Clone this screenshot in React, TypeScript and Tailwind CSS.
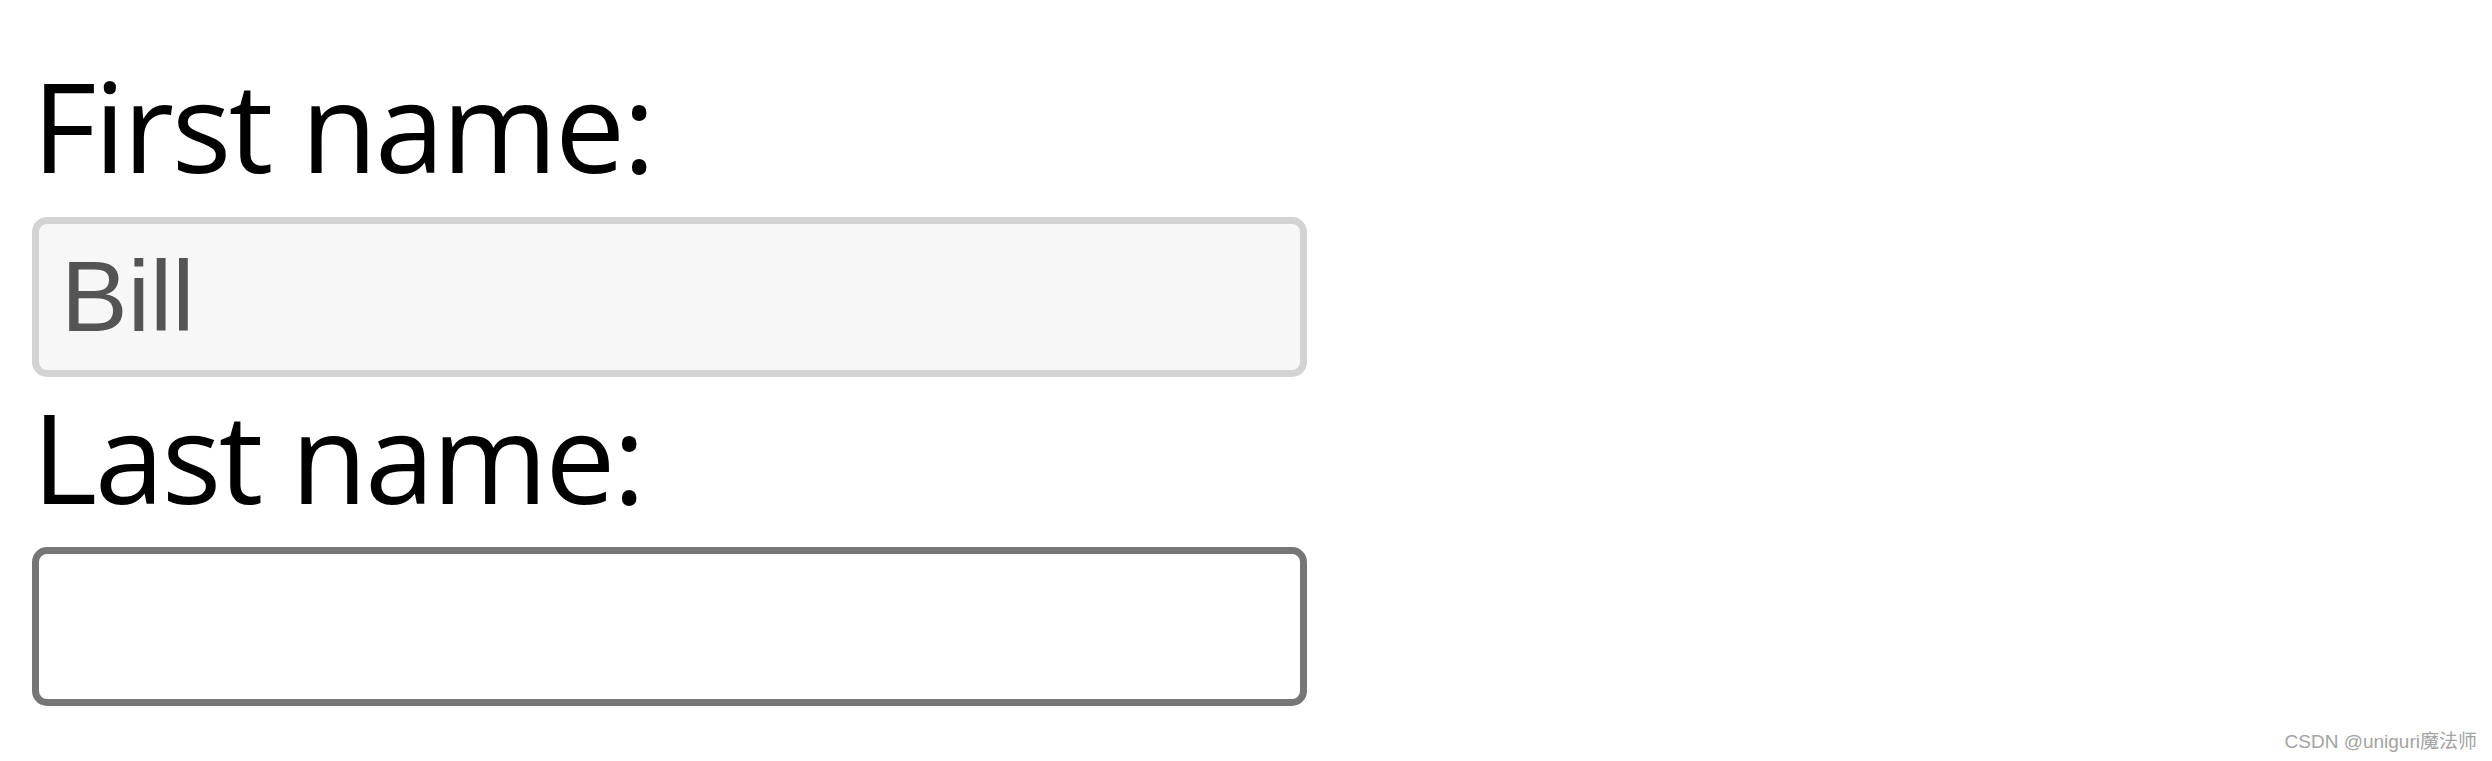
import React from 'react'

const labelFont = { fontFamily: '"Open Sans", "Noto Sans", sans-serif' }

function Label({ text }: { text: string }) {
  return (
    <div
      className="h-[125px] text-[125px] leading-none tracking-[-2.5px] text-black whitespace-nowrap"
      style={labelFont}
    >
      {text}
    </div>
  )
}

export default function App() {
  return (
    <div className="relative h-[761px] w-full overflow-hidden bg-white">
      <form className="flex flex-col px-[32px] pt-[62px]">
        <Label text="First name:" />
        <input
          type="text"
          disabled
          value="Bill"
          aria-label="First name"
          className="mt-[30px] h-[160px] w-[1275px] rounded-[15px] border-[7px] border-[#d3d3d3] bg-[#f7f7f7] pl-[22px] pb-[2px] font-['Liberation_Sans',Arial,sans-serif] text-[100px] leading-none text-[#545454] outline-none disabled:bg-[#f7f7f7] disabled:text-[#545454]"
        />
        <div className="mt-[16px]">
          <Label text="Last name:" />
        </div>
        <input
          type="text"
          aria-label="Last name"
          className="mt-[29px] h-[159px] w-[1275px] rounded-[15px] border-[7px] border-[#767676] bg-white outline-none"
        />
      </form>
      <div className="absolute bottom-[10px] right-[15px] font-['Liberation_Sans','Noto_Sans_CJK_SC',sans-serif] text-[19px] leading-none text-[#a3a3a3]">
        CSDN @uniguri魔法师
      </div>
    </div>
  )
}
